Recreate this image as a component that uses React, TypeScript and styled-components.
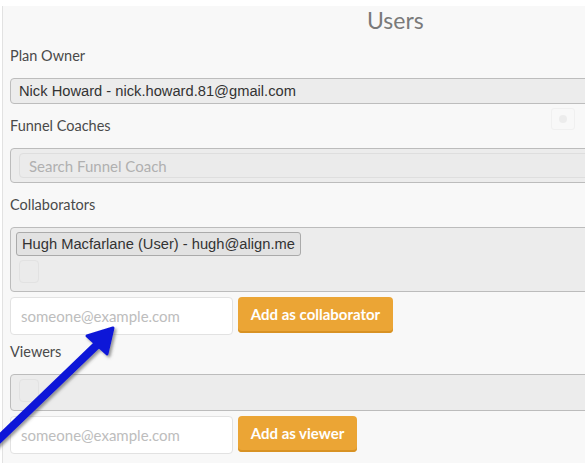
import React from 'react';
import styled, { createGlobalStyle } from 'styled-components';

const GlobalStyle = createGlobalStyle`
  html, body {
    margin: 0;
    padding: 0;
    background: #ffffff;
    overflow: hidden;
  }
  body {
    font-family: Lato, "Open Sans", sans-serif;
  }
`;

type SectionProps = {
  label: string;
  tight?: boolean;
  children: React.ReactNode;
}

const Section: React.FC<SectionProps> = ({ label, tight, children }) => {
  return (
    <>
      <Label $tight={tight}>{label}</Label>
      {children}
    </>
  );
}

type AddRowProps = {
  action: string;
  buttonWidth: number;
}

const AddRow: React.FC<AddRowProps> = ({ action, buttonWidth }) => {
  return (
    <Row>
      <EmailInput placeholder="someone@example.com" />
      <AddButton $width={buttonWidth}>{action}</AddButton>
    </Row>
  );
}

const App: React.FC = () => {
  return (
    <>
      <GlobalStyle />
      <Page>
        <Panel>
          <Title>Users</Title>
          <Section label="Plan Owner">
            <OwnerBox>Nick Howard - nick.howard.81@gmail.com</OwnerBox>
          </Section>
          <Section label="Funnel Coaches">
            <SelectBox $height={35}>
              <SearchInput placeholder="Search Funnel Coach" />
            </SelectBox>
          </Section>
          <Section label="Collaborators">
            <SelectBox $height={65}>
              <Chip>Hugh Macfarlane (User) - hugh@align.me</Chip>
              <EmptyChip />
            </SelectBox>
          </Section>
          <AddRow action="Add as collaborator" buttonWidth={155} />
          <Section label="Viewers" tight>
            <SelectBox $height={37}>
              <EmptyChip />
            </SelectBox>
          </Section>
          <AddRow action="Add as viewer" buttonWidth={119} />
          <GhostToggle>
            <GhostDot />
          </GhostToggle>
        </Panel>
        <Arrow width="130" height="130" viewBox="0 0 130 130">
          <defs>
            <filter id="arrowShadow" x="-20%" y="-20%" width="140%" height="140%">
              <feDropShadow dx="2" dy="2" stdDeviation="1.5" floodColor="#555" floodOpacity="0.6" />
            </filter>
          </defs>
          <g filter="url(#arrowShadow)">
            <line x1="-6" y1="122" x2="100" y2="20" stroke="#0a14d8" strokeWidth="8" strokeLinecap="round" />
            <polygon points="113,6 107,32 87,14" fill="#0a14d8" stroke="#0a14d8" strokeWidth="3" strokeLinejoin="round" />
          </g>
        </Arrow>
      </Page>
    </>
  );
}

export default App;

const Page = styled.div`
  position: relative;
  width: 585px;
  height: 475px;
  padding-top: 6px;
  box-sizing: border-box;
`

const Panel = styled.div`
  position: relative;
  margin-left: 2px;
  width: 640px;
  height: 457px;
  box-sizing: border-box;
  padding: 0 0 9px 7px;
  background: #f8f8f8;
  border-left: 1px solid #e2e2e2;
  display: flex;
  flex-direction: column;
  & > * {
    flex-shrink: 0;
  }
`

const Title = styled.div`
  padding-left: 357px;
  font-size: 23px;
  line-height: 28px;
  color: #7a7a7a;
`

const Label = styled.div<{ $tight?: boolean }>`
  margin: ${p => (p.$tight ? 7 : 12)}px 0 12px;
  font-size: 14.5px;
  line-height: 20px;
  color: #4a4a4a;
`

const OwnerBox = styled.div`
  height: 26px;
  box-sizing: border-box;
  border: 1px solid #bdbdbd;
  border-radius: 4px;
  background: #ececec;
  padding-left: 8px;
  font-family: "Liberation Sans", Arial, sans-serif;
  font-size: 14.7px;
  line-height: 24px;
  color: #333;
`

const SelectBox = styled.div<{ $height: number }>`
  height: ${p => p.$height}px;
  box-sizing: border-box;
  border: 1px solid #bcbcbc;
  border-radius: 4px;
  background: #ececec;
  padding: 4px 5px;
  display: flex;
  flex-direction: column;
  align-items: flex-start;
  gap: 4px;
`

const SearchInput = styled.input`
  width: 100%;
  height: 25px;
  margin-left: 3px;
  box-sizing: border-box;
  border: 1px solid #dedede;
  border-radius: 4px;
  background: #ebebeb;
  padding-left: 9px;
  font-family: Lato, "Open Sans", sans-serif;
  font-size: 15px;
  outline: none;
  &::placeholder {
    color: #b0b0b0;
  }
`

const Chip = styled.div`
  height: 24px;
  box-sizing: border-box;
  border: 1px solid #aaaaaa;
  border-radius: 3px;
  background: #e2e2e2;
  padding: 0 5px;
  font-family: "Liberation Sans", Arial, sans-serif;
  font-size: 14.7px;
  line-height: 22px;
  color: #333;
`

const EmptyChip = styled.div`
  width: 20px;
  height: 23px;
  margin-left: 3px;
  box-sizing: border-box;
  border: 1px solid #e2e2e2;
  border-radius: 4px;
  background: #ebebeb;
`

const Row = styled.div`
  margin-top: 5px;
  display: flex;
  align-items: flex-start;
  gap: 5px;
`

const EmailInput = styled.input`
  width: 223px;
  height: 38px;
  box-sizing: border-box;
  border: 1px solid #e2e2e2;
  border-radius: 4px;
  background: #ffffff;
  padding-left: 10px;
  font-family: Lato, "Open Sans", sans-serif;
  font-size: 15px;
  outline: none;
  &::placeholder {
    color: #bdbdbd;
  }
`

const AddButton = styled.button<{ $width: number }>`
  width: ${p => p.$width}px;
  height: 36px;
  border: none;
  border-radius: 4px;
  background: #eba535;
  box-shadow: inset 0 -2px 0 #d89224;
  color: #ffffff;
  font-family: Lato, "Open Sans", sans-serif;
  font-weight: 700;
  font-size: 15px;
  padding: 0 0 2px;
`

const GhostToggle = styled.div`
  position: absolute;
  left: 548px;
  top: 102px;
  width: 22px;
  height: 20px;
  border: 1px solid #f0f0f0;
  border-radius: 3px;
  display: flex;
  align-items: center;
  justify-content: center;
`

const GhostDot = styled.div`
  width: 8px;
  height: 8px;
  border-radius: 50%;
  background: #ececec;
`

const Arrow = styled.svg`
  position: absolute;
  left: 0;
  top: 322px;
  overflow: visible;
`
